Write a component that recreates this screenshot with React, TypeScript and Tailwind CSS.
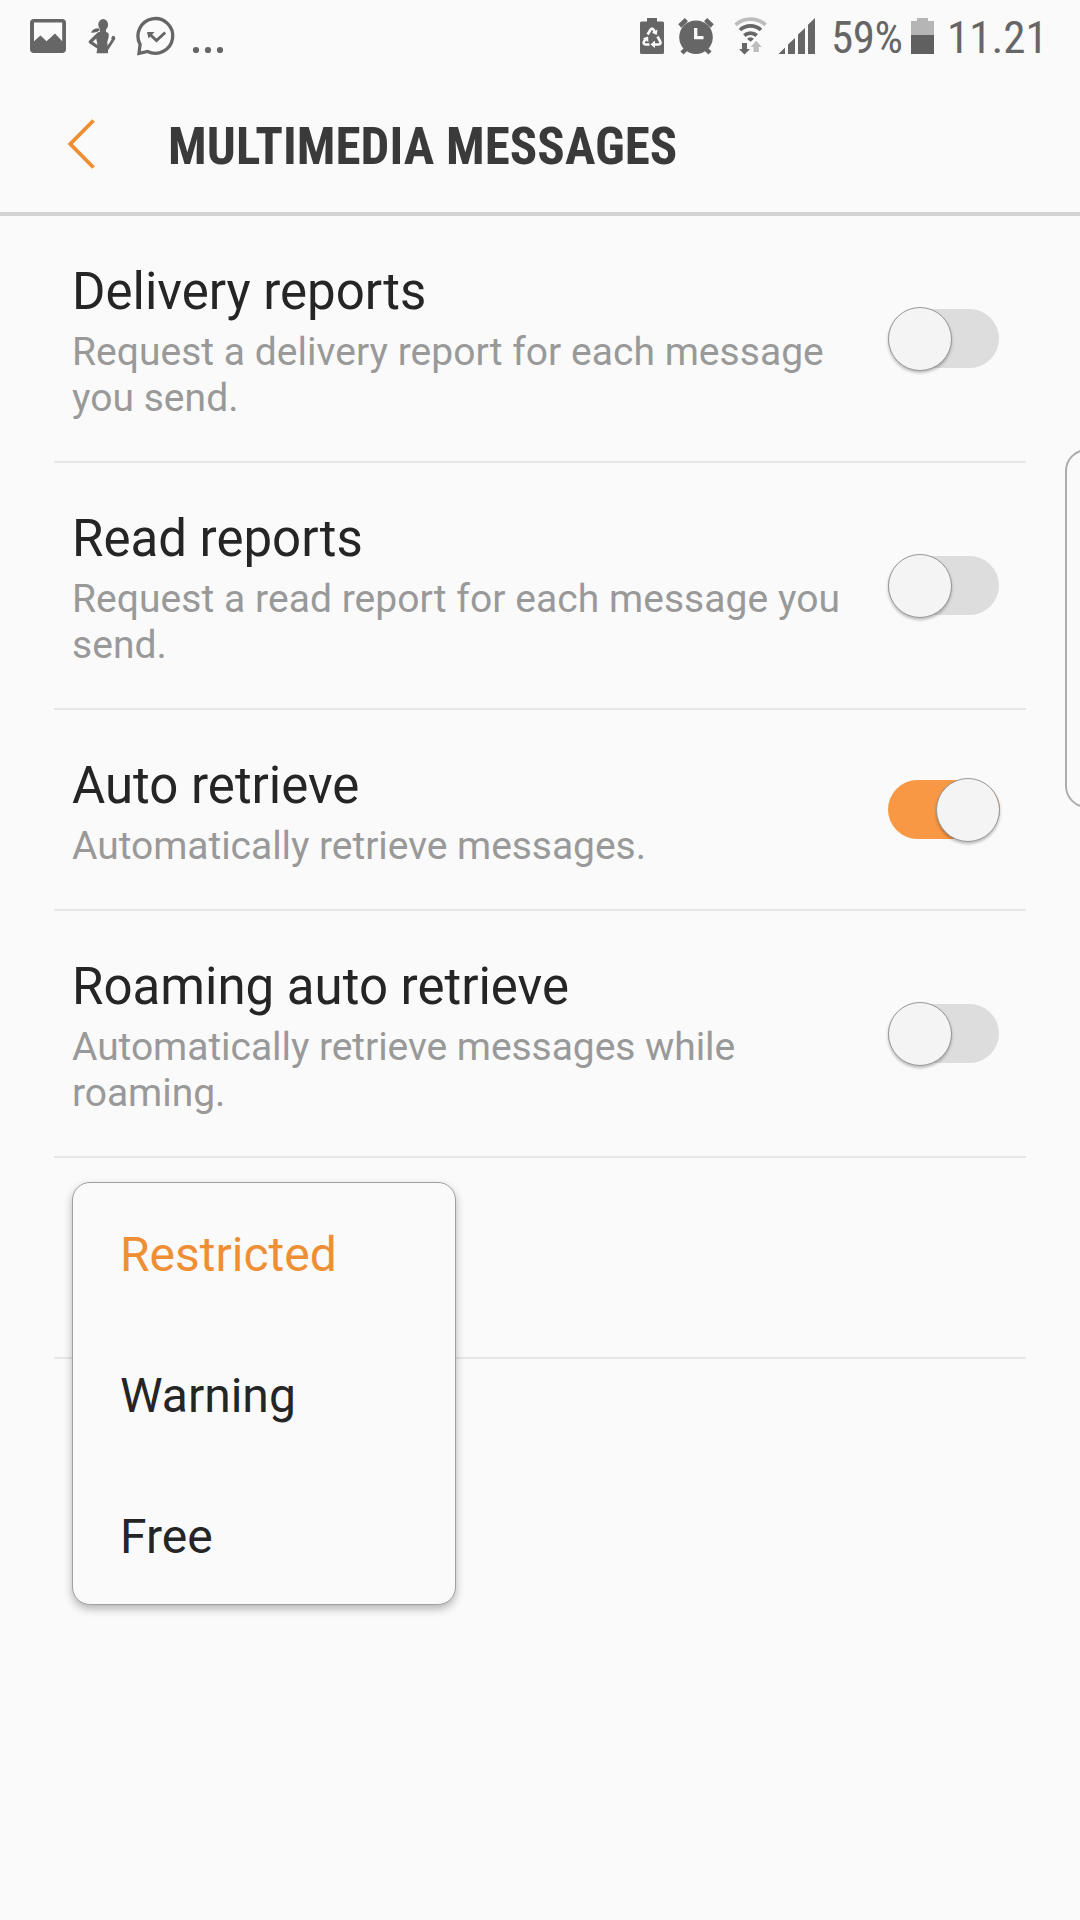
import React from "react";

type Setting = { title: string; lines: string[]; on: boolean; tracking: string };

const settings: Setting[] = [
  { title: "Delivery reports", lines: ["Request a delivery report for each message", "you send."], on: false, tracking: "tracking-[0.03px]" },
  { title: "Read reports", lines: ["Request a read report for each message you", "send."], on: false, tracking: "tracking-[0.05px]" },
  { title: "Auto retrieve", lines: ["Automatically retrieve messages."], on: true, tracking: "tracking-[-0.05px]" },
  { title: "Roaming auto retrieve", lines: ["Automatically retrieve messages while", "roaming."], on: false, tracking: "tracking-[-0.06px]" },
];

const options = ["Restricted", "Warning", "Free"];

function Toggle({ on }: { on: boolean }) {
  return (
    <div className={`relative -top-[3px] h-[59px] shrink-0 rounded-full ${on ? "w-[112px] bg-[#f99844]" : "mr-px w-[111px] bg-[#dddddd]"}`}>
      <div
        className={`absolute top-[-2px] size-16 rounded-full border border-[#999999] bg-[#f4f4f4] shadow-[0_2px_3px_rgba(0,0,0,0.25)] ${on ? "left-12" : "left-0"}`}
      />
    </div>
  );
}

function StatusLeft() {
  return (
    <svg width="240" height="72" viewBox="0 0 240 72" fill="#666666">
      <path fillRule="evenodd" d="M34 19h28a4 4 0 0 1 4 4v26a4 4 0 0 1-4 4H34a4 4 0 0 1-4-4V23a4 4 0 0 1 4-4Zm0 3.5v18.7l6.5-5.7 6 5.7 8.5-7.700 7.200 7.700V22.500Z" />
      <ellipse cx="103.200" cy="24.800" rx="4.900" ry="5.700" />
      <path d="M91 32.600q2-4.400 7.500-4.300l1.500 2q-3 2.700-9 2.300Z" />
      <path d="M100 29h6v3q2.600.4 2.800 2.400.2 3.500-1.600 7.600.3 2.500.8 5v6.300H96.500q.8-3.800 1-8l-1.500-8 1.500-4.700 2.500-.8Z" />
      <path fill="none" stroke="#666666" strokeWidth="3.200" strokeLinejoin="round" d="m98.500 34-8.300 8 7.800 5.200" />
      <path fill="none" stroke="#666666" strokeWidth="2.800" d="m107 49.200 5.800-9" />
      <ellipse cx="113.300" cy="38.300" rx="1.900" ry="2.600" />
      <path fill="none" stroke="#666666" strokeWidth="3.300" d="M140.100 44.300a17.400 17.400 0 1 1 7.500 7.200L139 53.400Z" />
      <path fill="none" stroke="#666666" strokeWidth="3" d="m149.500 34 7 6.500 8.700-8" />
      <path d="M147 32h7.500l-6 6.500Z" />
      <circle cx="196" cy="50" r="3.100" /><circle cx="208" cy="50" r="3.100" /><circle cx="220" cy="50" r="3.100" />
    </svg>
  );
}

function StatusRight() {
  return (
    <svg width="180" height="72" viewBox="638 0 180 72" fill="#666666">
      <path d="M647 18h10v3.500h5.500q1.500 0 1.500 1.500v29.500q0 1.500-1.500 1.500h-21q-1.500 0-1.500-1.500V23q0-1.500 1.500-1.500h5.500Z" />
      <g fill="none" stroke="#fafafa" strokeWidth="2.600">
        <path d="m647.600 34.500 3-5q1.400-2 2.800 0l1.800 3" />
        <path d="m657.500 36.500 2.800 5q1 2.800-1.800 3h-4.500" />
        <path d="M649.500 44.500h-3.700q-3-.3-1.800-3l2.200-3.700" />
      </g>
      <g fill="#fafafa">
        <path d="m657.500 29.500-.8 5.500-4.700-2.300Z" /><path d="m655 40.500-4.500 4 4.500 3.500Z" /><path d="m642.800 38.500 5.300-2 .3 5.400Z" />
      </g>
      <circle cx="696" cy="37.200" r="16.800" />
      <path fill="none" stroke="#666666" strokeWidth="4.500" d="m679.800 26 6.600-6.300m19.200 0 6.600 6.300M682 53l5-5m18 0 5 5" />
      <path fill="none" stroke="#fafafa" strokeWidth="3.300" d="M695.700 28v9.700h7.800" />
      <g fill="none" strokeWidth="3.700" stroke="#666666">
        <path stroke="#bdbdbd" d="M735.500 24.800a22.500 22.500 0 0 1 30 0" />
        <path d="M740 30a15.500 15.500 0 0 1 21 0" />
        <path d="M744.300 35.500a9.300 9.300 0 0 1 12.400 0" />
      </g>
      <path d="M747 38.800q3.500-3 7 0l-3.500 3Z" />
      <path d="M742 43h5v6h3l-5.500 5.500-5.500-5.500h3Z" />
      <path fill="#bdbdbd" d="M753.500 52v-5H750.700l5.500-6.300 5.500 6.300h-2.800v5Z" />
      <path d="m778.500 54 6.500-6.500V54ZM788 44.500l7-6.500v16h-7ZM798 34.500l7-6.500v26h-7ZM808 24.700l7-6.700v36h-7Z" />
    </svg>
  );
}

export default function App() {
  return (
    <div className="relative flex h-[1920px] w-[1080px] flex-col overflow-hidden bg-[#fafafa] font-['Roboto',sans-serif] text-[#252525]">
      <div className="flex h-[72px] items-center text-[45px] leading-[53px] text-[#666666]">
        <StatusLeft />
        <div className="ml-[398px]"><StatusRight /></div>
        <div className="ml-[13px] w-[72px] pt-0.5 font-['Roboto_Condensed','Roboto',sans-serif] tracking-[-0.5px] whitespace-nowrap [font-stretch:75%]">59%</div>
        <svg className="ml-[7px]" width="25" height="72" viewBox="910 0 25 72">
          <path fill="#b5b5b5" d="M917 18h11v3h6v14h-23V21h6Z" />
          <path fill="#606060" d="M911 35h23v19h-23Z" />
        </svg>
        <div className="ml-3 pt-0.5 font-['Roboto_Condensed','Roboto',sans-serif] whitespace-nowrap [font-stretch:75%]">11.21</div>
      </div>
      <header className="flex h-36 items-center border-b-4 border-[#d3d3d3] pl-[67px]">
        <svg className="mt-[3px]" width="30" height="50" viewBox="0 0 30 50" fill="none" stroke="#ef8f35" strokeWidth="3.900"><path d="M26.500 1.500 3.300 25 26.500 48.500" /></svg>
        <h1 className="ml-[71px] pt-[9px] font-['Roboto_Condensed','Roboto',sans-serif] text-[51px] leading-[60px] font-bold tracking-[0.05px] whitespace-nowrap text-[#3a3a3a] [font-stretch:75%]">MULTIMEDIA MESSAGES</h1>
      </header>
      <main className="mr-[54px] ml-[54px]">
        {settings.map((s) => (
          <section key={s.title} className="flex items-center justify-between border-b-2 border-[#e6e6e6] pt-[45px] pr-[26px] pb-10 pl-[18px]">
            <div className="whitespace-nowrap">
              <h2 className="text-[51px] leading-[61px]">{s.title}</h2>
              <div className={`pt-[7px] text-[39px] leading-[46px] text-[#999999] ${s.tracking}`}>
                {s.lines.map((l) => <p key={l}>{l}</p>)}
              </div>
            </div>
            <Toggle on={s.on} />
          </section>
        ))}
        <section className="relative h-[201px] border-b-2 border-[#e6e6e6]">
          <ul className="absolute top-6 left-[18px] h-[423px] w-[384px] rounded-[18px] border border-[#a0a0a0] bg-[#fafafa] shadow-[0_4px_9px_rgba(0,0,0,0.28)]">
            {options.map((o, i) => (
              <li key={o} className={`flex h-[141px] items-center pt-0.5 pl-[47px] text-[48px] leading-[56px] ${i === 0 ? "text-[#ef8f35]" : ""}`}>{o}</li>
            ))}
          </ul>
        </section>
      </main>
      <div className="absolute top-[449px] -right-8 h-[359px] w-[47px] rounded-l-[22px] border-2 border-[#adadad]" />
    </div>
  );
}
